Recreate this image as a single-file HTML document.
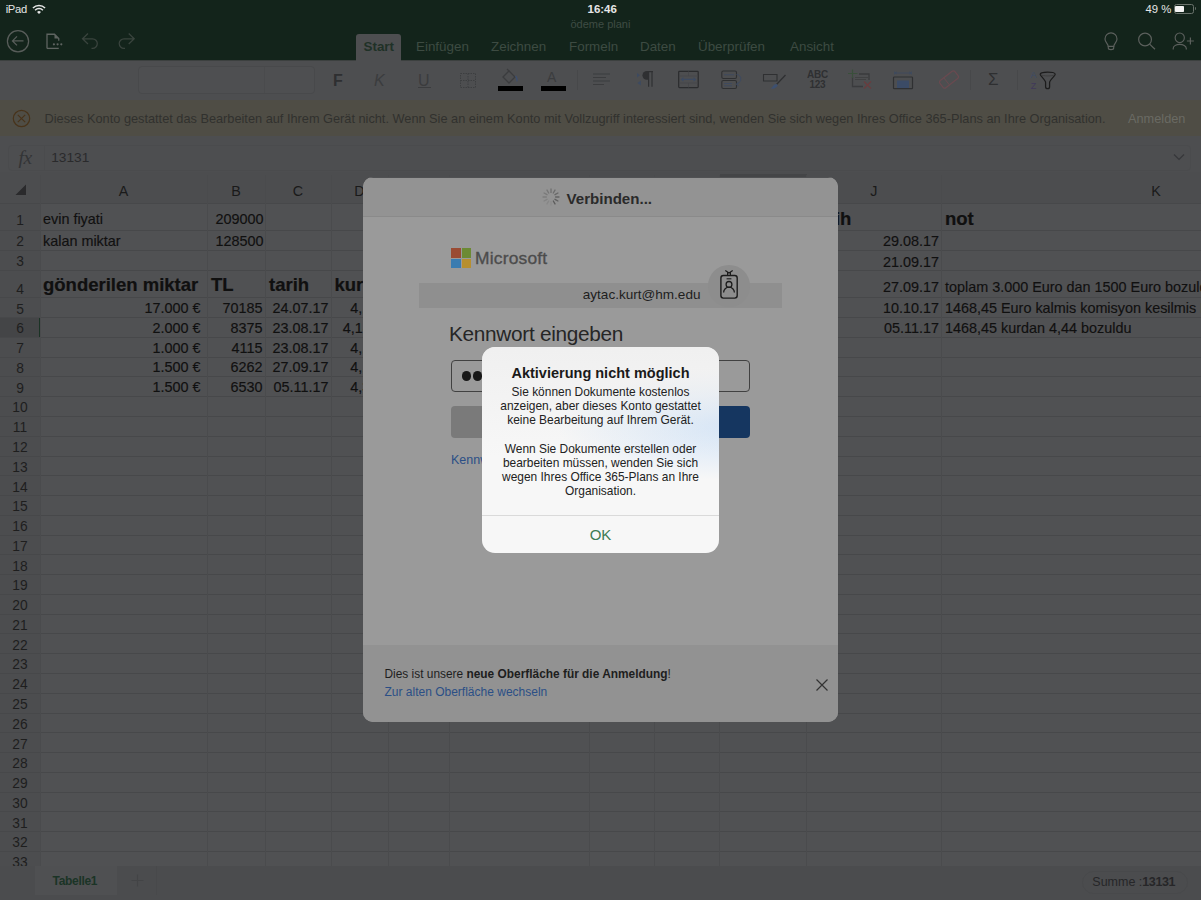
<!DOCTYPE html>
<html><head><meta charset="utf-8">
<style>
*{box-sizing:border-box}
html,body{margin:0;padding:0}
body{width:1201px;height:900px;overflow:hidden;position:relative;background:#505153;font-family:"Liberation Sans",sans-serif;}
.a{position:absolute}
.t{position:absolute;white-space:nowrap;line-height:1}
#top{left:0;top:0;width:1201px;height:60px;background:#13241b}
#ribbon{left:0;top:60px;width:1201px;height:40px;background:#4d4e50}
#warn{left:0;top:100px;width:1201px;height:36px;background:#4f4d45}
#fbar{left:0;top:136px;width:1201px;height:36px;background:#4d4e50}
#grid{left:0;top:172px;width:1201px;height:694px;background:#505153;overflow:hidden}
#btm{left:0;top:866px;width:1201px;height:34px;background:#4b4c4e}
.tab{font-size:13.4px;color:#3d4b42}
.cell{font-size:14.5px;color:#1a1a1a}
.b{font-weight:bold}
</style></head><body>
<div id="top" class="a">
  <div class="t" style="left:5.7px;top:4px;font-size:11.2px;color:#e6e6e6;letter-spacing:-0.3px">iPad</div>
  <svg class="a" style="left:31.5px;top:3.5px" width="14" height="10.5" viewBox="0 0 15 11"><path d="M1 4.2 A9 9 0 0 1 14 4.2" stroke="#e6e6e6" stroke-width="1.6" fill="none"/><path d="M3.3 6.5 A5.8 5.8 0 0 1 11.7 6.5" stroke="#e6e6e6" stroke-width="1.6" fill="none"/><path d="M7.5 10.5 L5.4 8.4 A3 3 0 0 1 9.6 8.4 Z" fill="#e6e6e6"/></svg>
  <div class="t b" style="left:587.5px;top:4.2px;font-size:11.5px;color:#e6e6e6">16:46</div>
  <div class="t" style="left:570.5px;top:18.8px;font-size:11px;color:#3f4c44">ödeme plani</div>
  <div class="t" style="left:1145.5px;top:4.2px;font-size:11.3px;color:#e6e6e6">49 %</div>
  <div class="a" style="left:1173.5px;top:4px;width:20.5px;height:10px;border:1px solid #6a736c;border-radius:2.5px"></div>
  <div class="a" style="left:1175.2px;top:5.8px;width:8.4px;height:6.3px;background:#f4f4f4;border-radius:0.8px"></div>
  <div class="a" style="left:1194.6px;top:7.4px;width:1.6px;height:3px;background:#5f6862;border-radius:0 1.5px 1.5px 0"></div>
  <!-- left icons -->
  <svg class="a" style="left:6px;top:30px" width="24" height="24" viewBox="0 0 24 24"><circle cx="12" cy="11.3" r="10.6" stroke="#585d5a" stroke-width="1.25" fill="none"/><path d="M17.5 10.9H6.5M11 6.4L6.5 10.9L11 15.4" stroke="#585d5a" stroke-width="1.3" fill="none"/></svg>
  <svg class="a" style="left:45px;top:33px" width="20" height="18" viewBox="0 0 20 18"><path d="M2 15.4V1.25H9.5L13.75 5.5V7.8" stroke="#5f6461" stroke-width="1.3" fill="none"/><path d="M9.5 1.25V5.5H13.75Z" fill="#5f6461"/><path d="M2 15.4H13.75" stroke="#5f6461" stroke-width="1.3"/><circle cx="8.9" cy="11.3" r="1.1" fill="#5f6461"/><circle cx="12.6" cy="11.3" r="1.1" fill="#5f6461"/><circle cx="16.3" cy="11.3" r="1.1" fill="#5f6461"/></svg>
  <svg class="a" style="left:80px;top:32px" width="20" height="18" viewBox="0 0 20 18"><path d="M8 1.5L2.5 6.8L8 12M2.5 6.8H12.5A4.8 4.8 0 0 1 12.5 16.4H11.5" stroke="#3a443e" stroke-width="1.25" fill="none"/></svg>
  <svg class="a" style="left:117px;top:32px" width="20" height="18" viewBox="0 0 20 18"><path d="M11.7 1.5L17.2 6.8L11.7 12M17.2 6.8H7A4.8 4.8 0 0 0 7 16.4H8" stroke="#3a443e" stroke-width="1.25" fill="none"/></svg>
  <!-- tabs -->
  <div class="a" style="left:356px;top:34px;width:45px;height:26px;background:#4d4e50;border-radius:3px 3px 0 0"></div>
  <div class="t tab b" style="left:363.5px;top:40px;color:#1f3127">Start</div>
  <div class="t tab" style="left:416px;top:40px">Einfügen</div>
  <div class="t tab" style="left:491px;top:40px">Zeichnen</div>
  <div class="t tab" style="left:569px;top:40px">Formeln</div>
  <div class="t tab" style="left:640px;top:40px">Daten</div>
  <div class="t tab" style="left:698px;top:40px">Überprüfen</div>
  <div class="t tab" style="left:790px;top:40px">Ansicht</div>
  <!-- right icons -->
  <svg class="a" style="left:1100px;top:30px" width="22" height="22" viewBox="0 0 22 22"><path d="M8.2 16.3C8.2 13.6 5 12.3 5 8.9A6 6 0 0 1 17 8.9C17 12.3 13.8 13.6 13.8 16.3Z" stroke="#5c605d" stroke-width="1.15" fill="none"/><path d="M8.3 16.3V18A2.7 1.6 0 0 0 13.7 18V16.3" stroke="#5c605d" stroke-width="1.15" fill="none"/></svg>
  <svg class="a" style="left:1135px;top:30px" width="24" height="22" viewBox="0 0 24 22"><circle cx="10.05" cy="9.5" r="6.4" stroke="#5c605d" stroke-width="1.2" fill="none"/><path d="M14.6 14.1L20 19.3" stroke="#5c605d" stroke-width="1.2"/></svg>
  <svg class="a" style="left:1170px;top:30px" width="26" height="22" viewBox="0 0 26 22"><ellipse cx="9.75" cy="7.75" rx="4.6" ry="4.8" stroke="#5c605d" stroke-width="1.15" fill="none"/><path d="M3.2 19.5V18.5C3.2 13 16.3 13 16.3 18.5V19.5" stroke="#5c605d" stroke-width="1.15" fill="none"/><path d="M16.9 11H23.9M20.4 7.6V14.4" stroke="#5c605d" stroke-width="1.2"/></svg>
</div>
<div id="ribbon" class="a">
  <div class="a" style="left:0;top:0;width:356px;height:1px;background:#3c403f"></div><div class="a" style="left:401px;top:0;width:800px;height:1px;background:#3c403f"></div>
  <div class="a" style="left:138px;top:6px;width:177px;height:27.5px;border:1px solid #48494b;border-radius:4px;background:#4e4f51"></div>
  <div class="a" style="left:264px;top:7px;width:1px;height:25.5px;background:#4a4b4d"></div>
  <div class="t b" style="left:333px;top:13px;font-size:16px;color:#2e2f31">F</div>
  <div class="t" style="left:374px;top:13px;font-size:16px;font-style:italic;color:#3b3c3e">K</div>
  <div class="t" style="left:418px;top:13px;font-size:16px;color:#3b3c3e">U</div>
  <div class="a" style="left:418px;top:26.5px;width:13px;height:1px;background:#3b3c3e"></div>
  <svg class="a" style="left:459px;top:12px" width="18" height="17" viewBox="0 0 18 17"><path d="M1.5 1.5H16.5V15.5H1.5ZM9 1.5V15.5M1.5 8.5H16.5" stroke="#3d3e40" stroke-width="1" stroke-dasharray="1.5 1" fill="none"/></svg>
  <svg class="a" style="left:500px;top:8px" width="22" height="18" viewBox="0 0 22 18"><path d="M3 9L9 3L15 9L9 15Z" stroke="#3b3c3e" stroke-width="1.3" fill="none"/><path d="M9 3L7 1" stroke="#3b3c3e" stroke-width="1.3"/><path d="M15.5 8C17.5 10 17 13 16.5 13" stroke="#3d4e6e" stroke-width="1.5" fill="none"/></svg>
  <div class="a" style="left:498px;top:26px;width:25px;height:5px;background:#000"></div>
  <div class="t" style="left:547px;top:10px;font-size:14px;color:#3b3c3e">A</div>
  <div class="a" style="left:541px;top:26px;width:25px;height:5px;background:#000"></div>
  <div class="a" style="left:577px;top:10px;width:1px;height:20px;background:#47484a"></div>
  <svg class="a" style="left:593px;top:13px" width="18" height="13" viewBox="0 0 18 13"><path d="M0 1H17M0 4.5H13M0 8H17M0 11.5H11" stroke="#3b3c3e" stroke-width="1.2"/></svg>
  <svg class="a" style="left:636px;top:10px" width="20" height="18" viewBox="0 0 20 18"><path d="M1 3L4 5.25L1 7.5Z" fill="#3d4a60"/><path d="M4.8 10.5L1.5 13L4.8 15.5Z" fill="#3d4a60"/><path d="M13 1H10.8A4.35 4.35 0 0 0 10.8 9.7H13Z" fill="#2f3032"/><path d="M12.6 1.2V16.7M16 1.2V16.7M12 1.6H17" stroke="#2f3032" stroke-width="1.2" fill="none"/></svg>
  <svg class="a" style="left:677px;top:9px" width="24" height="21" viewBox="0 0 24 21"><rect x="1.7" y="2.3" width="19.5" height="16.3" rx="0.8" stroke="#2b2c2e" stroke-width="1.2" fill="none"/><path d="M2 7H21M2 14H21M11.5 2.3V7M11.5 14V18.6" stroke="#444547" stroke-width="0.7"/><path d="M4.5 10.4H18.5M6.5 8.6L4.5 10.4L6.5 12.2M16.5 8.6L18.5 10.4L16.5 12.2" stroke="#3d4a60" stroke-width="1.1" fill="none"/></svg>
  <svg class="a" style="left:720px;top:9px" width="24" height="22" viewBox="0 0 24 22"><rect x="1.8" y="2" width="14.7" height="7.5" rx="1.5" stroke="#2f3032" stroke-width="1.1" fill="none"/><rect x="1.8" y="11.5" width="14.7" height="8" rx="1.5" stroke="#2f3032" stroke-width="1.1" fill="none"/><path d="M4 5.75H14M4 14.5H12M4 16.8H12" stroke="#3d4a60" stroke-width="0.9"/><path d="M16.5 5.5C22 5.5 22.5 13.5 16.5 15.2M18.6 13L16.3 15.3L18.8 16.8" stroke="#3d4a60" stroke-width="1" fill="none"/></svg>
  <svg class="a" style="left:762px;top:12px" width="26" height="18" viewBox="0 0 26 18"><path d="M1.5 2.5H15V9H1.5Z" stroke="#2f3032" stroke-width="1.1" fill="none"/><path d="M23.5 3L14.5 12.5" stroke="#2f3032" stroke-width="1.3"/><path d="M14.5 12C11.5 12 11 15 8.5 16.5C12.5 17.2 15.2 15.5 15.8 13Z" fill="#3d5070"/></svg>
  <div class="t b" style="left:806.5px;top:10.2px;font-size:10px;color:#2f3032;line-height:8.9px;text-align:center;width:22px;letter-spacing:-0.3px;transform:scaleY(1.12);transform-origin:top">ABC<br>123</div>
  <svg class="a" style="left:846px;top:8px" width="28" height="22" viewBox="0 0 28 22"><path d="M13 6H23V12M6.5 9V18.5H17" stroke="#3a3b3d" stroke-width="1.3" fill="none"/><path d="M9 9.5H22M9 11.5H20" stroke="#3e3f41" stroke-width="0.9"/><path d="M2 5.5H11.5M6.5 1.5V10" stroke="#3a4f3b" stroke-width="1.2"/><path d="M18 13.5L25 20.5M25 13.5L18 20.5" stroke="#6a3c3e" stroke-width="1.1"/></svg>
  <svg class="a" style="left:892px;top:11px" width="22" height="19" viewBox="0 0 22 19"><path d="M3 2H19M3 2L5 0.8M3 2L5 3.2M19 2L17 0.8M19 2L17 3.2M2.5 0.5V3.5M19.5 0.5V3.5" stroke="#3d4a60" stroke-width="0.8" fill="none"/><rect x="1.5" y="6" width="19" height="11.7" rx="0.8" stroke="#2f3032" stroke-width="1.2" fill="none"/><rect x="5" y="9.5" width="12" height="7.5" fill="#3b4b66"/></svg>
  <svg class="a" style="left:937px;top:9px" width="24" height="21" viewBox="0 0 24 21"><g transform="rotate(-38 12 10.5)"><rect x="2.5" y="6" width="19" height="9" rx="2" stroke="#6a4a50" stroke-width="1.2" fill="none"/><path d="M9 6V15" stroke="#6a4a50" stroke-width="0.9"/></g></svg>
  <div class="a" style="left:970px;top:10px;width:1px;height:20px;background:#47484a"></div>
  <div class="t" style="left:988px;top:11px;font-size:17px;color:#2e2f31">&Sigma;</div>
  <div class="a" style="left:1017px;top:10px;width:1px;height:20px;background:#47484a"></div>
  <div class="t" style="left:1030.6px;top:11px;font-size:9px;color:#3c4b66">A</div>
  <div class="t" style="left:1030.8px;top:22.1px;font-size:9px;color:#40385a">Z</div>
  <svg class="a" style="left:1038px;top:10px" width="20" height="20" viewBox="0 0 20 20"><path d="M2.2 4.3C2.2 1.5 17.2 1.5 17.2 4.3C17.2 6 11.6 10 11.6 12.5V16.7A2 2 0 0 1 7.6 16.7V12.5C7.6 10 2.2 6 2.2 4.3Z" stroke="#1c1c1c" stroke-width="1.25" fill="none"/><path d="M2.8 4.8C5 6.3 14.5 6.3 16.6 4.8" stroke="#3a3a3a" stroke-width="0.8" fill="none"/></svg>
</div>
<div id="warn" class="a">
  <svg class="a" style="left:12px;top:9px" width="19" height="19" viewBox="0 0 19 19"><circle cx="9.5" cy="9.5" r="8.2" stroke="#48331a" stroke-width="1.2" fill="none"/><path d="M5.8 5.8L13.2 13.2M13.2 5.8L5.8 13.2" stroke="#48331a" stroke-width="1.2"/></svg>
  <div class="t" style="left:44.5px;top:13px;font-size:12.75px;color:#31312e">Dieses Konto gestattet das Bearbeiten auf Ihrem Gerät nicht. Wenn Sie an einem Konto mit Vollzugriff interessiert sind, wenden Sie sich wegen Ihres Office 365-Plans an Ihre Organisation.</div>
  <div class="t" style="left:1128px;top:13px;font-size:12.75px;color:#6a6a63">Anmelden</div>
</div>
<div id="fbar" class="a">
  <div class="a" style="left:8px;top:9px;width:1183px;height:26px;border:1px solid #4a4b4d;border-radius:4px"></div>
  <div class="a" style="left:44px;top:10px;width:1px;height:24px;background:#4a4b4d"></div>
  <div class="t" style="left:18.5px;top:11.5px;font-family:'Liberation Serif',serif;font-style:italic;font-size:19.5px;color:#333436;letter-spacing:-0.5px">fx</div>
  <div class="t" style="left:51.2px;top:15.3px;font-size:13.7px;color:#2a2a2c">13131</div>
  <svg class="a" style="left:1173px;top:16.5px" width="12" height="8" viewBox="0 0 12 8"><path d="M1 1.5L6 6.5L11 1.5" stroke="#36373a" stroke-width="1.2" fill="none"/></svg>
</div>
<div id="grid" class="a">
<div class="a" style="left:0;top:0;width:1201px;height:31px;background:#4c4d4f"></div>
<div class="a" style="left:0;top:31px;width:40px;height:700px;background:#4c4d4f"></div>
<div class="a" style="left:0;top:145.17px;width:40px;height:19.8px;background:#444547"></div>
<div class="a" style="left:39px;top:145.17px;width:2px;height:19.8px;background:#1b3325"></div>
<div class="a" style="left:720px;top:2px;width:87px;height:3px;background:#444547"></div>
<div class="a" style="left:0;top:31.00px;width:1201px;height:1px;background:#47484a"></div>
<div class="a" style="left:0;top:58.00px;width:1201px;height:1px;background:#47484a"></div>
<div class="a" style="left:0;top:78.00px;width:1201px;height:1px;background:#47484a"></div>
<div class="a" style="left:0;top:98.30px;width:1201px;height:1px;background:#47484a"></div>
<div class="a" style="left:0;top:125.40px;width:1201px;height:1px;background:#47484a"></div>
<div class="a" style="left:0;top:145.17px;width:1201px;height:1px;background:#47484a"></div>
<div class="a" style="left:0;top:164.94px;width:1201px;height:1px;background:#47484a"></div>
<div class="a" style="left:0;top:184.71px;width:1201px;height:1px;background:#47484a"></div>
<div class="a" style="left:0;top:204.48px;width:1201px;height:1px;background:#47484a"></div>
<div class="a" style="left:0;top:224.25px;width:1201px;height:1px;background:#47484a"></div>
<div class="a" style="left:0;top:244.02px;width:1201px;height:1px;background:#47484a"></div>
<div class="a" style="left:0;top:263.79px;width:1201px;height:1px;background:#47484a"></div>
<div class="a" style="left:0;top:283.56px;width:1201px;height:1px;background:#47484a"></div>
<div class="a" style="left:0;top:303.33px;width:1201px;height:1px;background:#47484a"></div>
<div class="a" style="left:0;top:323.10px;width:1201px;height:1px;background:#47484a"></div>
<div class="a" style="left:0;top:342.87px;width:1201px;height:1px;background:#47484a"></div>
<div class="a" style="left:0;top:362.64px;width:1201px;height:1px;background:#47484a"></div>
<div class="a" style="left:0;top:382.41px;width:1201px;height:1px;background:#47484a"></div>
<div class="a" style="left:0;top:402.18px;width:1201px;height:1px;background:#47484a"></div>
<div class="a" style="left:0;top:421.95px;width:1201px;height:1px;background:#47484a"></div>
<div class="a" style="left:0;top:441.72px;width:1201px;height:1px;background:#47484a"></div>
<div class="a" style="left:0;top:461.49px;width:1201px;height:1px;background:#47484a"></div>
<div class="a" style="left:0;top:481.26px;width:1201px;height:1px;background:#47484a"></div>
<div class="a" style="left:0;top:501.03px;width:1201px;height:1px;background:#47484a"></div>
<div class="a" style="left:0;top:520.80px;width:1201px;height:1px;background:#47484a"></div>
<div class="a" style="left:0;top:540.57px;width:1201px;height:1px;background:#47484a"></div>
<div class="a" style="left:0;top:560.34px;width:1201px;height:1px;background:#47484a"></div>
<div class="a" style="left:0;top:580.11px;width:1201px;height:1px;background:#47484a"></div>
<div class="a" style="left:0;top:599.88px;width:1201px;height:1px;background:#47484a"></div>
<div class="a" style="left:0;top:619.65px;width:1201px;height:1px;background:#47484a"></div>
<div class="a" style="left:0;top:639.42px;width:1201px;height:1px;background:#47484a"></div>
<div class="a" style="left:0;top:659.19px;width:1201px;height:1px;background:#47484a"></div>
<div class="a" style="left:0;top:678.96px;width:1201px;height:1px;background:#47484a"></div>
<div class="a" style="left:0;top:698.73px;width:1201px;height:1px;background:#47484a"></div>
<div class="a" style="left:40px;top:3px;width:1px;height:700px;background:#4a4b4d"></div>
<div class="a" style="left:207px;top:3px;width:1px;height:700px;background:#4a4b4d"></div>
<div class="a" style="left:265px;top:3px;width:1px;height:700px;background:#4a4b4d"></div>
<div class="a" style="left:331px;top:3px;width:1px;height:700px;background:#4a4b4d"></div>
<div class="a" style="left:388px;top:3px;width:1px;height:700px;background:#4a4b4d"></div>
<div class="a" style="left:449px;top:3px;width:1px;height:700px;background:#4a4b4d"></div>
<div class="a" style="left:589px;top:3px;width:1px;height:700px;background:#4a4b4d"></div>
<div class="a" style="left:654px;top:3px;width:1px;height:700px;background:#4a4b4d"></div>
<div class="a" style="left:719px;top:3px;width:1px;height:700px;background:#4a4b4d"></div>
<div class="a" style="left:806px;top:3px;width:1px;height:700px;background:#4a4b4d"></div>
<div class="a" style="left:941px;top:3px;width:1px;height:700px;background:#4a4b4d"></div>
<div class="t" style="left:103.5px;width:40px;text-align:center;top:11.599999999999994px;font-size:14.3px;color:#1a1a1a">A</div>
<div class="t" style="left:216.0px;width:40px;text-align:center;top:11.599999999999994px;font-size:14.3px;color:#1a1a1a">B</div>
<div class="t" style="left:278.0px;width:40px;text-align:center;top:11.599999999999994px;font-size:14.3px;color:#1a1a1a">C</div>
<div class="t" style="left:339.5px;width:40px;text-align:center;top:11.599999999999994px;font-size:14.3px;color:#1a1a1a">D</div>
<div class="t" style="left:398.5px;width:40px;text-align:center;top:11.599999999999994px;font-size:14.3px;color:#1a1a1a">E</div>
<div class="t" style="left:499.0px;width:40px;text-align:center;top:11.599999999999994px;font-size:14.3px;color:#1a1a1a">F</div>
<div class="t" style="left:601.5px;width:40px;text-align:center;top:11.599999999999994px;font-size:14.3px;color:#1a1a1a">G</div>
<div class="t" style="left:666.8px;width:40px;text-align:center;top:11.599999999999994px;font-size:14.3px;color:#1a1a1a">H</div>
<div class="t" style="left:743.0px;width:40px;text-align:center;top:11.599999999999994px;font-size:14.3px;color:#1a1a1a">I</div>
<div class="t" style="left:853.8px;width:40px;text-align:center;top:11.599999999999994px;font-size:14.3px;color:#1a1a1a">J</div>
<div class="t" style="left:1136.0px;width:40px;text-align:center;top:11.599999999999994px;font-size:14.3px;color:#1a1a1a">K</div>
<svg class="a" style="left:15px;top:12px" width="12" height="12" viewBox="0 0 12 12"><path d="M11 0.5V11H0.5Z" fill="#2a2a2c"/></svg>
<div class="t" style="left:0;width:40px;text-align:center;top:41.5px;font-size:13.8px;color:#1e1e1e">1</div>
<div class="t" style="left:0;width:40px;text-align:center;top:63.3px;font-size:13.8px;color:#1e1e1e">2</div>
<div class="t" style="left:0;width:40px;text-align:center;top:83.4px;font-size:13.8px;color:#1e1e1e">3</div>
<div class="t" style="left:0;width:40px;text-align:center;top:110.7px;font-size:13.8px;color:#1e1e1e">4</div>
<div class="t" style="left:0;width:40px;text-align:center;top:130.6px;font-size:13.8px;color:#1e1e1e">5</div>
<div class="t" style="left:0;width:40px;text-align:center;top:150.4px;font-size:13.8px;color:#1e1e1e">6</div>
<div class="t" style="left:0;width:40px;text-align:center;top:170.1px;font-size:13.8px;color:#1e1e1e">7</div>
<div class="t" style="left:0;width:40px;text-align:center;top:189.9px;font-size:13.8px;color:#1e1e1e">8</div>
<div class="t" style="left:0;width:40px;text-align:center;top:209.7px;font-size:13.8px;color:#1e1e1e">9</div>
<div class="t" style="left:0;width:40px;text-align:center;top:229.4px;font-size:13.8px;color:#1e1e1e">10</div>
<div class="t" style="left:0;width:40px;text-align:center;top:249.2px;font-size:13.8px;color:#1e1e1e">11</div>
<div class="t" style="left:0;width:40px;text-align:center;top:269.0px;font-size:13.8px;color:#1e1e1e">12</div>
<div class="t" style="left:0;width:40px;text-align:center;top:288.7px;font-size:13.8px;color:#1e1e1e">13</div>
<div class="t" style="left:0;width:40px;text-align:center;top:308.5px;font-size:13.8px;color:#1e1e1e">14</div>
<div class="t" style="left:0;width:40px;text-align:center;top:328.3px;font-size:13.8px;color:#1e1e1e">15</div>
<div class="t" style="left:0;width:40px;text-align:center;top:348.1px;font-size:13.8px;color:#1e1e1e">16</div>
<div class="t" style="left:0;width:40px;text-align:center;top:367.8px;font-size:13.8px;color:#1e1e1e">17</div>
<div class="t" style="left:0;width:40px;text-align:center;top:387.6px;font-size:13.8px;color:#1e1e1e">18</div>
<div class="t" style="left:0;width:40px;text-align:center;top:407.4px;font-size:13.8px;color:#1e1e1e">19</div>
<div class="t" style="left:0;width:40px;text-align:center;top:427.1px;font-size:13.8px;color:#1e1e1e">20</div>
<div class="t" style="left:0;width:40px;text-align:center;top:446.9px;font-size:13.8px;color:#1e1e1e">21</div>
<div class="t" style="left:0;width:40px;text-align:center;top:466.7px;font-size:13.8px;color:#1e1e1e">22</div>
<div class="t" style="left:0;width:40px;text-align:center;top:486.4px;font-size:13.8px;color:#1e1e1e">23</div>
<div class="t" style="left:0;width:40px;text-align:center;top:506.2px;font-size:13.8px;color:#1e1e1e">24</div>
<div class="t" style="left:0;width:40px;text-align:center;top:526.0px;font-size:13.8px;color:#1e1e1e">25</div>
<div class="t" style="left:0;width:40px;text-align:center;top:545.8px;font-size:13.8px;color:#1e1e1e">26</div>
<div class="t" style="left:0;width:40px;text-align:center;top:565.5px;font-size:13.8px;color:#1e1e1e">27</div>
<div class="t" style="left:0;width:40px;text-align:center;top:585.3px;font-size:13.8px;color:#1e1e1e">28</div>
<div class="t" style="left:0;width:40px;text-align:center;top:605.1px;font-size:13.8px;color:#1e1e1e">29</div>
<div class="t" style="left:0;width:40px;text-align:center;top:624.8px;font-size:13.8px;color:#1e1e1e">30</div>
<div class="t" style="left:0;width:40px;text-align:center;top:644.6px;font-size:13.8px;color:#1e1e1e">31</div>
<div class="t" style="left:0;width:40px;text-align:center;top:664.4px;font-size:13.8px;color:#1e1e1e">32</div>
<div class="t" style="left:0;width:40px;text-align:center;top:684.1px;font-size:13.8px;color:#1e1e1e">33</div>
<div class="t" style="top:40.2px;font-size:14.4px;color:#101010;-webkit-text-stroke:0.15px #101010;left:43px;">evin fiyati</div>
<div class="t" style="top:40.2px;font-size:14.4px;color:#101010;-webkit-text-stroke:0.15px #101010;right:937.5px;">209000</div>
<div class="t" style="top:62.2px;font-size:14.4px;color:#101010;-webkit-text-stroke:0.15px #101010;left:43px;">kalan miktar</div>
<div class="t" style="top:62.2px;font-size:14.4px;color:#101010;-webkit-text-stroke:0.15px #101010;right:937.5px;">128500</div>
<div class="t" style="top:103.6px;font-size:18.5px;color:#101010;-webkit-text-stroke:0.15px #101010;font-weight:bold;-webkit-text-stroke:0.2px #0a0a0a;left:43px;">gönderilen miktar</div>
<div class="t" style="top:103.6px;font-size:18.5px;color:#101010;-webkit-text-stroke:0.15px #101010;font-weight:bold;-webkit-text-stroke:0.2px #0a0a0a;left:211px;">TL</div>
<div class="t" style="top:103.6px;font-size:18.5px;color:#101010;-webkit-text-stroke:0.15px #101010;font-weight:bold;-webkit-text-stroke:0.2px #0a0a0a;left:269px;">tarih</div>
<div class="t" style="top:103.6px;font-size:18.5px;color:#101010;-webkit-text-stroke:0.15px #101010;font-weight:bold;-webkit-text-stroke:0.2px #0a0a0a;left:334.5px;">kurs</div>
<div class="t" style="top:129.0px;font-size:14.4px;color:#101010;-webkit-text-stroke:0.15px #101010;right:1000.5px;">17.000 €</div>
<div class="t" style="top:129.0px;font-size:14.4px;color:#101010;-webkit-text-stroke:0.15px #101010;right:938.5px;">70185</div>
<div class="t" style="top:129.0px;font-size:14.4px;color:#101010;-webkit-text-stroke:0.15px #101010;right:872.5px;">24.07.17</div>
<div class="t" style="top:129.0px;font-size:14.4px;color:#101010;-webkit-text-stroke:0.15px #101010;left:350.3px;">4,13</div>
<div class="t" style="top:148.8px;font-size:14.4px;color:#101010;-webkit-text-stroke:0.15px #101010;right:1000.5px;">2.000 €</div>
<div class="t" style="top:148.8px;font-size:14.4px;color:#101010;-webkit-text-stroke:0.15px #101010;right:938.5px;">8375</div>
<div class="t" style="top:148.8px;font-size:14.4px;color:#101010;-webkit-text-stroke:0.15px #101010;right:872.5px;">23.08.17</div>
<div class="t" style="top:148.8px;font-size:14.4px;color:#101010;-webkit-text-stroke:0.15px #101010;left:342.8px;">4,187</div>
<div class="t" style="top:168.5px;font-size:14.4px;color:#101010;-webkit-text-stroke:0.15px #101010;right:1000.5px;">1.000 €</div>
<div class="t" style="top:168.5px;font-size:14.4px;color:#101010;-webkit-text-stroke:0.15px #101010;right:938.5px;">4115</div>
<div class="t" style="top:168.5px;font-size:14.4px;color:#101010;-webkit-text-stroke:0.15px #101010;right:872.5px;">23.08.17</div>
<div class="t" style="top:168.5px;font-size:14.4px;color:#101010;-webkit-text-stroke:0.15px #101010;left:350.3px;">4,11</div>
<div class="t" style="top:188.3px;font-size:14.4px;color:#101010;-webkit-text-stroke:0.15px #101010;right:1000.5px;">1.500 €</div>
<div class="t" style="top:188.3px;font-size:14.4px;color:#101010;-webkit-text-stroke:0.15px #101010;right:938.5px;">6262</div>
<div class="t" style="top:188.3px;font-size:14.4px;color:#101010;-webkit-text-stroke:0.15px #101010;right:872.5px;">27.09.17</div>
<div class="t" style="top:188.3px;font-size:14.4px;color:#101010;-webkit-text-stroke:0.15px #101010;left:350.3px;">4,17</div>
<div class="t" style="top:208.1px;font-size:14.4px;color:#101010;-webkit-text-stroke:0.15px #101010;right:1000.5px;">1.500 €</div>
<div class="t" style="top:208.1px;font-size:14.4px;color:#101010;-webkit-text-stroke:0.15px #101010;right:938.5px;">6530</div>
<div class="t" style="top:208.1px;font-size:14.4px;color:#101010;-webkit-text-stroke:0.15px #101010;right:872.5px;">05.11.17</div>
<div class="t" style="top:208.1px;font-size:14.4px;color:#101010;-webkit-text-stroke:0.15px #101010;left:350.3px;">4,35</div>
<div class="t" style="top:37.5px;font-size:18.5px;color:#101010;-webkit-text-stroke:0.15px #101010;font-weight:bold;-webkit-text-stroke:0.2px #0a0a0a;left:811.3px;">tarih</div>
<div class="t" style="top:37.5px;font-size:18.5px;color:#101010;-webkit-text-stroke:0.15px #101010;font-weight:bold;-webkit-text-stroke:0.2px #0a0a0a;left:945px;">not</div>
<div class="t" style="top:62.2px;font-size:14.4px;color:#101010;-webkit-text-stroke:0.15px #101010;right:262px;">29.08.17</div>
<div class="t" style="top:82.5px;font-size:14.4px;color:#101010;-webkit-text-stroke:0.15px #101010;right:262px;">21.09.17</div>
<div class="t" style="top:107.6px;font-size:14.4px;color:#101010;-webkit-text-stroke:0.15px #101010;right:262px;">27.09.17</div>
<div class="t" style="top:107.6px;font-size:14.4px;color:#101010;-webkit-text-stroke:0.15px #101010;left:945px;">toplam 3.000 Euro dan 1500 Euro bozuldu</div>
<div class="t" style="top:129.0px;font-size:14.4px;color:#101010;-webkit-text-stroke:0.15px #101010;right:262px;">10.10.17</div>
<div class="t" style="top:129.0px;font-size:14.4px;color:#101010;-webkit-text-stroke:0.15px #101010;left:945px;">1468,45 Euro kalmis komisyon kesilmis Bakiye</div>
<div class="t" style="top:148.8px;font-size:14.4px;color:#101010;-webkit-text-stroke:0.15px #101010;right:262px;">05.11.17</div>
<div class="t" style="top:148.8px;font-size:14.4px;color:#101010;-webkit-text-stroke:0.15px #101010;left:945px;">1468,45 kurdan 4,44 bozuldu</div>
</div>
<div id="btm" class="a">
  <div class="a" style="left:35px;top:0;width:82px;height:29px;background:#4f5052"></div>
  <div class="t b" style="left:52.5px;top:9px;font-size:12px;color:#1b3426;letter-spacing:-0.3px">Tabelle1</div>
  <svg class="a" style="left:131px;top:8px" width="13" height="13" viewBox="0 0 13 13"><path d="M6.5 0.5V12.5M0.5 6.5H12.5" stroke="#434446" stroke-width="1.1"/></svg>
  <div class="a" style="left:156px;top:0;width:1px;height:29px;background:#48494b"></div>
  <div class="a" style="left:1081.5px;top:4.8px;width:106px;height:23px;border:1px solid #48494b;border-radius:12px"></div>
  <div class="t" style="left:1092.3px;top:10px;font-size:12.5px;color:#262628">Summe :<b style="letter-spacing:-0.4px">13131</b></div>
</div>
<!-- DIALOG -->
<div id="dlg" class="a" style="left:363px;top:177px;width:475px;height:545px;border-radius:10px;background:#9a9a9a;overflow:hidden">
  <div class="a" style="left:0;top:0;width:475px;height:1px;background:#505153"></div>
  <div class="a" style="left:0;top:1px;width:475px;height:38.5px;background:#939393"></div>
  <div class="a" style="left:0;top:39px;width:475px;height:1.2px;background:#8a8a8a"></div>
  <svg class="a" style="left:178.9px;top:11px" width="18" height="18" viewBox="0 0 18 18"><g stroke-width="1.35" stroke-linecap="round"><path d="M9.00 4.40L9.00 1.00" stroke="#717171"/><path d="M11.30 5.02L13.00 2.07" stroke="#6d6d6d"/><path d="M12.98 6.70L15.93 5.00" stroke="#696969"/><path d="M13.60 9.00L17.00 9.00" stroke="#646464"/><path d="M12.98 11.30L15.93 13.00" stroke="#606060"/><path d="M11.30 12.98L13.00 15.93" stroke="#5c5c5c"/><path d="M9.00 13.60L9.00 17.00" stroke="#8c8c8c"/><path d="M6.70 12.98L5.00 15.93" stroke="#878787"/><path d="M5.02 11.30L2.07 13.00" stroke="#838383"/><path d="M4.40 9.00L1.00 9.00" stroke="#7e7e7e"/><path d="M5.02 6.70L2.07 5.00" stroke="#7a7a7a"/><path d="M6.70 5.02L5.00 2.07" stroke="#767676"/></g></svg>
  <div class="t b" style="left:203.5px;top:13.8px;font-size:15.1px;color:#2a2a2a">Verbinden...</div>
  <!-- MS logo -->
  <div class="a" style="left:88px;top:71px;width:9.5px;height:9.5px;background:#9a4b33"></div>
  <div class="a" style="left:98.5px;top:71px;width:9.5px;height:9.5px;background:#6c8a34"></div>
  <div class="a" style="left:88px;top:81.5px;width:9.5px;height:9.5px;background:#3b7cb0"></div>
  <div class="a" style="left:98.5px;top:81.5px;width:9.5px;height:9.5px;background:#b78f30"></div>
  <div class="t" style="left:112px;top:72.6px;font-size:17.4px;color:#4c4c4c;letter-spacing:0.2px;-webkit-text-stroke:0.35px #4c4c4c">Microsoft</div>
  <div class="a" style="left:56px;top:106px;width:363px;height:25px;background:#8f8f8f"></div>
  <div class="t" style="left:219.8px;top:111.4px;font-size:13.55px;color:#1e1e1e">aytac.kurt@hm.edu</div>
  <div class="a" style="left:345.3px;top:88.4px;width:41.5px;height:41.5px;border-radius:50%;background:#8d8d8d"></div>
  <svg class="a" style="left:352px;top:91px" width="28" height="34" viewBox="0 0 28 34">
    <rect x="5.9" y="7.5" width="16.3" height="22.6" rx="2.5" stroke="#1c1c1c" stroke-width="1.4" fill="none"/>
    <path d="M11.6 10.8H16.4" stroke="#1c1c1c" stroke-width="1.1"/>
    <circle cx="14" cy="16.4" r="2.9" stroke="#1c1c1c" stroke-width="1.3" fill="none"/>
    <path d="M8.6 24.6A5.4 5.4 0 0 1 19.4 24.6" stroke="#1c1c1c" stroke-width="1.3" fill="none"/>
    <path d="M10.3 2.4L14 5L17.7 2.4M12.6 4.2V7.5M15.4 4.2V7.5" stroke="#1c1c1c" stroke-width="1.2" fill="none"/>
  </svg>
  <div class="t" style="left:86px;top:147px;font-size:20.8px;color:#262626;letter-spacing:-0.3px">Kennwort eingeben</div>
  <div class="a" style="left:88px;top:183px;width:299px;height:32px;border:1.2px solid #414141;border-radius:4px"></div>
  <div class="a" style="left:98.8px;top:194.2px;width:9.4px;height:9.4px;border-radius:50%;background:#181818"></div>
  <div class="a" style="left:109.9px;top:194.2px;width:9.4px;height:9.4px;border-radius:50%;background:#181818"></div>
  <div class="a" style="left:88px;top:229px;width:150px;height:32px;background:#7a7a7a;border-radius:4px"></div>
  <div class="a" style="left:240px;top:229px;width:147px;height:32px;background:#153660;border-radius:4px"></div>
  <div class="t" style="left:88px;top:277px;font-size:12.5px;color:#2b4f86">Kennwort vergessen?</div>
  <!-- footer -->
  <div class="a" style="left:0;top:468px;width:475px;height:77px;background:#929292"></div>
  <div class="t" style="left:21.5px;top:492px;font-size:11.9px;color:#1e1e1e">Dies ist unsere <b>neue Oberfläche für die Anmeldung</b>!</div>
  <div class="t" style="left:21.5px;top:509px;font-size:12px;color:#2b4f86">Zur alten Oberfläche wechseln</div>
  <svg class="a" style="left:452px;top:501px" width="14" height="14" viewBox="0 0 14 14"><path d="M1.5 1.5L12.5 12.5M12.5 1.5L1.5 12.5" stroke="#333" stroke-width="1.2"/></svg>
</div>
<!-- ALERT -->
<div id="alert" class="a" style="left:482px;top:347px;width:237px;height:206px;border-radius:13px;overflow:hidden;background:#f7f7f7">
  <div class="a" style="left:0;top:0;width:237px;height:206px;background:radial-gradient(ellipse 175px 55px at 250px 78px, rgba(208,227,248,1), rgba(212,229,248,0.6) 45%, rgba(230,238,248,0) 100%)"></div>
  <div class="a" style="left:0;top:0;width:237px;height:206px;background:linear-gradient(180deg, rgba(238,238,238,0.8), rgba(240,240,240,0) 110px)"></div>
  <div class="t b" style="left:0;width:237px;text-align:center;top:19px;font-size:14.5px;color:#1a1a1a">Aktivierung nicht möglich</div>
  <div class="a" style="left:0;width:237px;text-align:center;top:38px;font-size:11.95px;line-height:14.2px;color:#222;white-space:nowrap">Sie können Dokumente kostenlos<br>anzeigen, aber dieses Konto gestattet<br>keine Bearbeitung auf Ihrem Gerät.<br><br>Wenn Sie Dokumente erstellen oder<br>bearbeiten müssen, wenden Sie sich<br>wegen Ihres Office 365-Plans an Ihre<br>Organisation.</div>
  <div class="a" style="left:0;top:168px;width:237px;height:1px;background:#dadada"></div>
  <div class="t" style="left:0;width:237px;text-align:center;top:180px;font-size:15px;color:#3e7b54">OK</div>
</div>
</body></html>
